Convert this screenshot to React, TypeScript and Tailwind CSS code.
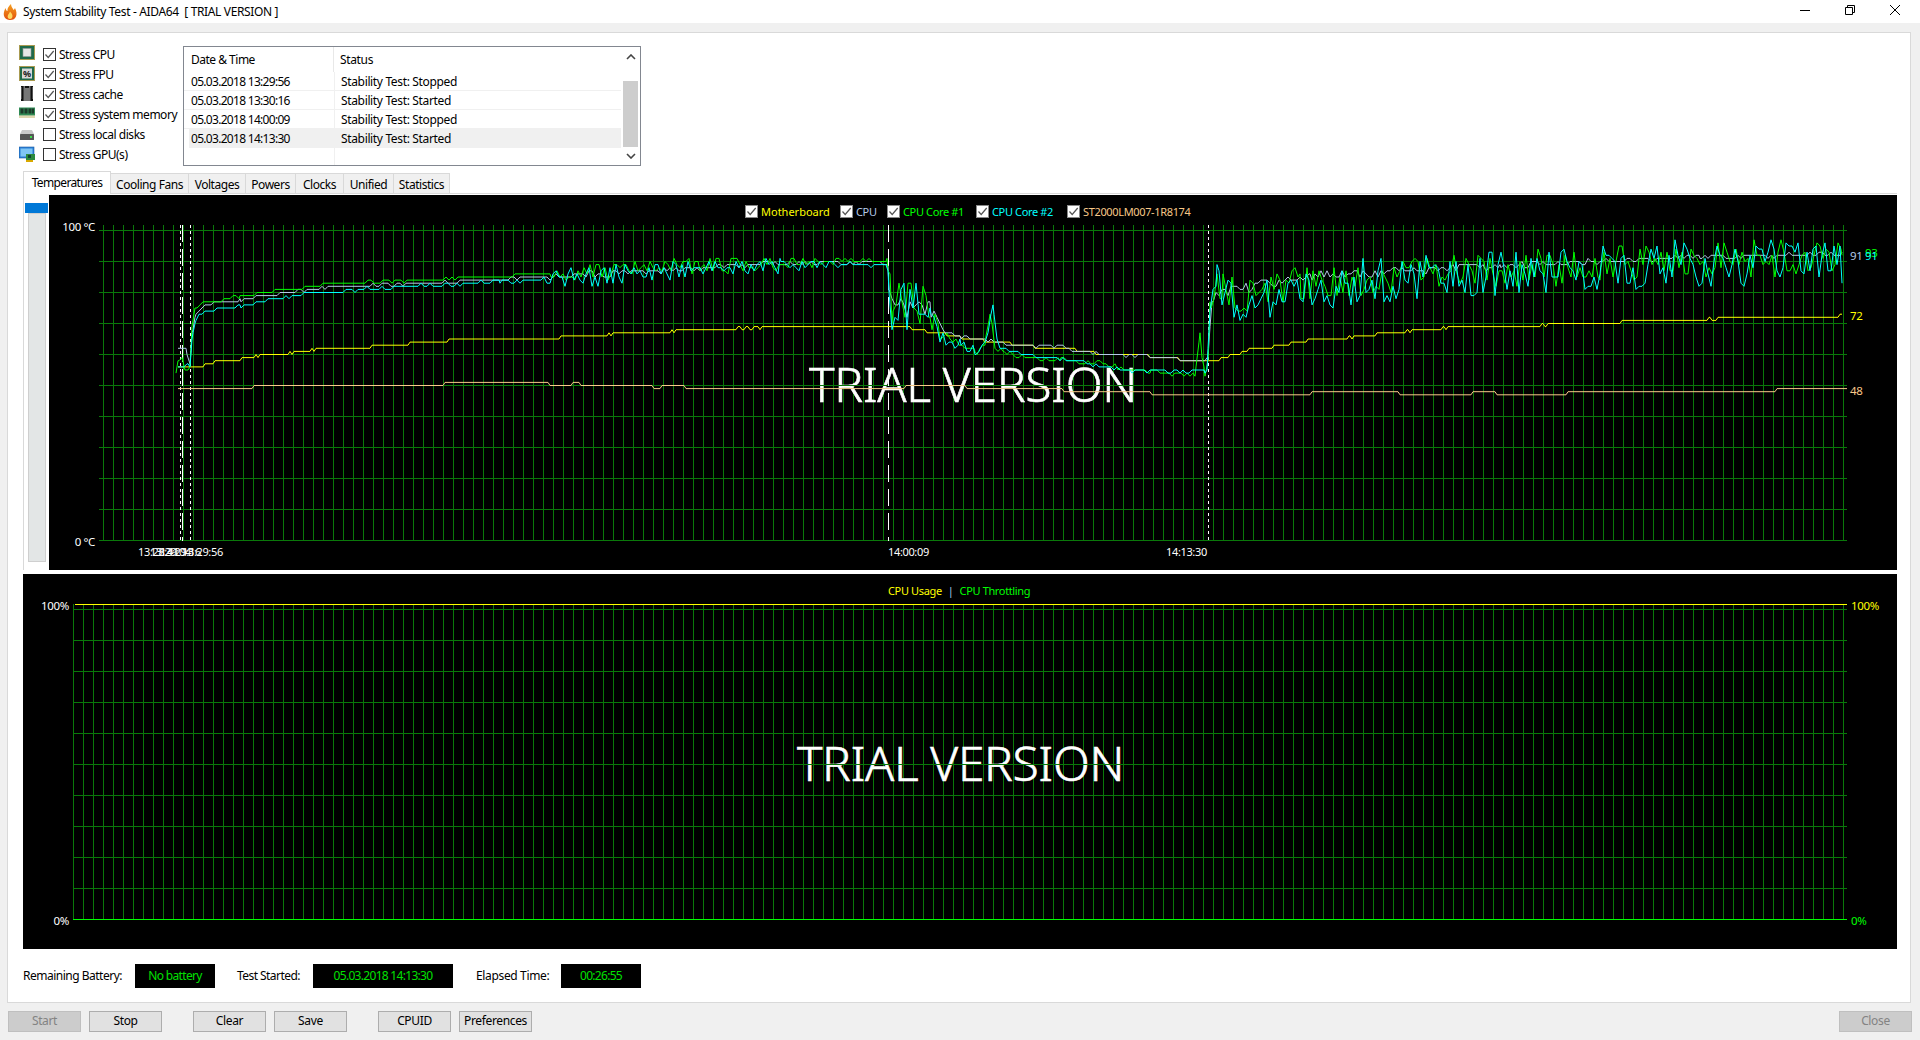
import React from "react";

type P = [number, number];

function rngOf(seed: number) {
  let a = seed;
  return () => {
    a |= 0;
    a = (a + 0x6d2b79f5) | 0;
    let t = Math.imul(a ^ (a >>> 15), 1 | a);
    t = (t + Math.imul(t ^ (t >>> 7), 61 | t)) ^ t;
    return ((t ^ (t >>> 14)) >>> 0) / 4294967296;
  };
}
const lerp = (table: P[], x: number) => {
  if (x <= table[0][0]) return table[0][1];
  for (let i = 1; i < table.length; i++) {
    if (x <= table[i][0]) {
      const [x0, y0] = table[i - 1];
      const [x1, y1] = table[i];
      return y0 + ((y1 - y0) * (x - x0)) / (x1 - x0 || 1);
    }
  }
  return table[table.length - 1][1];
};
const quant = (y: number) => 541.5 - Math.round((541.5 - y) / 3.1) * 3.1;

function noisy(anchors: P[], amps: P[], seed: number, step = 3) {
  const r = rngOf(seed);
  const xs = new Set<number>();
  const start = anchors[0][0];
  const end = anchors[anchors.length - 1][0];
  for (let x = start; x <= end; x += step) xs.add(x);
  anchors.forEach((a) => xs.add(a[0]));
  const sorted = Array.from(xs).sort((a, b) => a - b);
  return sorted
    .map((x) => {
      const amp = lerp(amps, x);
      const y = lerp(anchors, x) + (r() - 0.5) * 2 * amp;
      return `${x.toFixed(1)},${quant(y).toFixed(1)}`;
    })
    .join(" ");
}
function stairs(list: P[], endX: number) {
  const pts: string[] = [];
  list.forEach(([x, t], i) => {
    const y = (541.5 - t * 3.1).toFixed(1);
    pts.push(`${x + (i ? 2 : 0)},${y}`);
    const nx = i + 1 < list.length ? list[i + 1][0] : endX;
    pts.push(`${nx},${y}`);
  });
  return pts.join(" ");
}

const ampG: P[] = [[178, 4], [196, 2], [200, 1], [540, 1.2], [555, 8], [790, 8], [840, 3], [886, 1], [889, 24], [930, 24], [940, 6], [985, 4], [1000, 2], [1200, 2.5], [1212, 18], [1842, 19]];
const ampC: P[] = [[178, 4], [196, 2], [200, 1.2], [540, 1.4], [555, 10], [790, 9], [840, 3], [886, 1], [889, 26], [930, 24], [940, 6], [985, 4], [1000, 2], [1200, 2], [1212, 20], [1300, 24], [1842, 24]];
const ampW: P[] = [[178, 5], [196, 1], [540, 0.8], [555, 3], [886, 2], [889, 14], [930, 10], [940, 1], [1210, 1], [1212, 5], [1842, 1.5]];

const green: P[] = [[176, 372], [178, 365], [182, 360], [185, 372], [190, 368], [192, 327], [195, 312], [200, 306], [205, 303], [240, 298], [270, 293], [310, 288], [330, 285], [430, 281], [500, 277], [550, 275], [700, 267], [780, 263], [886, 262], [888, 264], [892, 306], [930, 306], [940, 335], [960, 347], [975, 354], [985, 347], [990, 312], [995, 347], [1003, 354], [1040, 360], [1060, 360], [1100, 364], [1130, 370], [1150, 372], [1195, 376], [1200, 335], [1204, 374], [1208, 365], [1210, 310], [1214, 290], [1217, 272], [1222, 287], [1240, 296], [1300, 287], [1400, 277], [1600, 265], [1842, 257]];
const cyan: P[] = [[178, 368], [188, 366], [190, 366], [192, 340], [195, 322], [200, 316], [205, 312], [240, 307], [270, 300], [300, 296], [320, 293], [400, 288], [500, 283], [550, 280], [700, 270], [780, 266], [886, 266], [888, 268], [892, 308], [930, 308], [940, 338], [960, 345], [975, 352], [985, 345], [993, 306], [998, 345], [1010, 353], [1060, 360], [1100, 367], [1130, 372], [1205, 372], [1208, 360], [1210, 297], [1217, 270], [1225, 295], [1240, 300], [1300, 290], [1400, 280], [1600, 268], [1842, 260]];
const gray: P[] = [[178, 350], [186, 350], [190, 366], [192, 335], [195, 318], [205, 306], [240, 301], [270, 296], [310, 291], [330, 288], [430, 284], [500, 280], [550, 278], [700, 269], [780, 264], [886, 264], [888, 266], [892, 305], [930, 312], [945, 333], [960, 338], [1000, 342], [1010, 347], [1060, 347], [1080, 353], [1150, 358], [1205, 362], [1208, 360], [1212, 300], [1230, 292], [1310, 277], [1500, 267], [1700, 258], [1842, 255]];

const yellowPts = stairs(
  [[178, 56], [203, 57], [213, 58], [240, 59], [254, 60], [256, 59], [258, 60], [288, 61], [290, 60], [292, 61], [310, 62], [312, 61], [314, 62], [370, 63], [408, 64], [447, 65], [559, 66], [607, 67], [609, 66], [611, 67], [670, 68], [672, 67], [674, 68], [733, 68], [736, 69], [740, 68], [744, 69], [748, 68], [752, 69], [758, 68], [760, 69], [910, 68], [925, 67], [945, 66], [960, 65], [983, 64], [1010, 63], [1033, 62], [1075, 61], [1094, 60], [1148, 59], [1178, 58], [1219, 59], [1228, 60], [1240, 61], [1247, 62], [1272, 63], [1289, 64], [1306, 65], [1347, 66], [1350, 65], [1352, 66], [1375, 67], [1405, 68], [1408, 67], [1410, 68], [1441, 69], [1444, 68], [1446, 69], [1540, 70], [1543, 69], [1546, 70], [1620, 71], [1707, 72], [1710, 71], [1716, 72], [1838, 73]],
  1842
);
const sandyPts = stairs(
  [[178, 49], [252, 50], [443, 51], [548, 50], [571, 51], [579, 50], [652, 49], [660, 50], [684, 49], [904, 50], [965, 49], [1062, 48], [1150, 47], [1310, 48], [1398, 47], [1471, 48], [1495, 47], [1566, 48], [1775, 49]],
  1847
);

const Check = ({ on, className }: { on: boolean; className: string }) => (
  <span className={className}>
    {on && (
      <svg viewBox="0 0 11 11" className="w-[11px] h-[11px]">
        <path d="M1.5 5.5 L4.2 8.5 L9.7 2" fill="none" stroke="#555" strokeWidth="1.2" />
      </svg>
    )}
  </span>
);

const Ico = ({ children }: { children: React.ReactNode }) => (
  <svg viewBox="0 0 17 17" className="w-[17px] h-[17px] shrink-0">
    {children}
  </svg>
);

const icons: React.ReactNode[] = [
  <Ico key="cpu">
    <rect x="0" y="0" width="16" height="15" fill="#a89a50" />
    <rect x="1" y="1" width="14" height="13" fill="#1f6a4a" />
    <rect x="4" y="3.5" width="8" height="8" fill="#e6e6e6" stroke="#9a9a9a" strokeWidth="0.6" />
  </Ico>,
  <Ico key="fpu">
    <rect x="0" y="1" width="16" height="15" fill="#a89a50" />
    <rect x="1" y="2" width="14" height="13" fill="#1f6a4a" />
    <rect x="3" y="3.5" width="10" height="10" fill="#d8d8d8" />
    <text x="8" y="12" textAnchor="middle" fontSize="9" fontWeight="700" fill="#222">%</text>
  </Ico>,
  <Ico key="cache">
    <rect x="2" y="1" width="12" height="15" fill="#111" />
    <rect x="4.5" y="1" width="7" height="15" fill="#777" />
    <rect x="6" y="1" width="4" height="2" fill="#111" />
    <path d="M2 3h1M2 5h1M2 7h1M2 9h1M2 11h1M2 13h1M13 3h1M13 5h1M13 7h1M13 9h1M13 11h1M13 13h1" stroke="#bbb" strokeWidth="0.8" />
  </Ico>,
  <Ico key="mem">
    <rect x="0" y="2.5" width="16" height="8" fill="#2f8a55" />
    <rect x="1.5" y="3.5" width="3" height="5" fill="#1c3a2a" />
    <rect x="5.5" y="3.5" width="3" height="5" fill="#1c3a2a" />
    <rect x="9.5" y="3.5" width="3" height="5" fill="#1c3a2a" />
    <rect x="13" y="3.5" width="2" height="5" fill="#1c3a2a" />
    <path d="M1 10.5v2.5M3 10.5v2.5M5 10.5v2.5M7 10.5v2.5M9 10.5v2.5M11 10.5v2.5M13 10.5v2.5M15 10.5v2.5" stroke="#b5a64e" strokeWidth="0.9" />
  </Ico>,
  <Ico key="disk">
    <path d="M3 5 H13 L15 9 H1 Z" fill="#c9c9c9" />
    <rect x="1" y="9" width="14" height="6" rx="0.5" fill="#555" />
    <rect x="11" y="11" width="2" height="2" fill="#3fdc4f" />
  </Ico>,
  <Ico key="gpu">
    <rect x="0" y="2" width="15" height="11" fill="#2a7fd6" stroke="#1c5aa0" strokeWidth="0.6" />
    <rect x="1.5" y="3.5" width="12" height="8" fill="#7fc6f5" />
    <rect x="7" y="9" width="9" height="6" fill="#2b8a3e" />
    <rect x="9" y="10" width="3" height="3" fill="#143" />
    <rect x="7" y="15" width="7" height="2" fill="#d8a900" />
  </Ico>,
];

const stress: [string, boolean][] = [
  ["Stress CPU", true],
  ["Stress FPU", true],
  ["Stress cache", true],
  ["Stress system memory", true],
  ["Stress local disks", false],
  ["Stress GPU(s)", false],
];
const log: [string, string][] = [
  ["05.03.2018 13:29:56", "Stability Test: Stopped"],
  ["05.03.2018 13:30:16", "Stability Test: Started"],
  ["05.03.2018 14:00:09", "Stability Test: Stopped"],
  ["05.03.2018 14:13:30", "Stability Test: Started"],
];
const tabs: [string, string][] = [
  ["Cooling Fans", "w-[78px]"],
  ["Voltages", "w-[57px]"],
  ["Powers", "w-[50px]"],
  ["Clocks", "w-[48px]"],
  ["Unified", "w-[50px]"],
  ["Statistics", "w-[56px]"],
];
const legend: [string, string, string][] = [
  ["Motherboard", "text-[#ffff00] tracking-[0px]", "w-[95px]"],
  ["CPU", "text-[#b4c8e8]", "w-[47px]"],
  ["CPU Core #1", "text-[#00ff00]", "w-[89px]"],
  ["CPU Core #2", "text-[#00ffff]", "w-[91px]"],
  ["ST2000LM007-1R8174", "text-[#f8c888]", "w-[130px]"],
];

const range = (from: number, to: number, step: number) => {
  const a: number[] = [];
  for (let v = from; v <= to; v += step) a.push(v);
  return a;
};

function Chart1() {
  const V = range(103.5, 1843.5, 10);
  const H = range(231.5, 541.5, 31);
  return (
    <svg viewBox="49 226 1848 345" className="w-[1848px] h-[345px] block overflow-visible">
      <g stroke="#0a780a" shapeRendering="crispEdges">
        {V.map((x) => (
          <line key={x} x1={x} x2={x} y1={226} y2={542} />
        ))}
      </g>
      <text x={809} y={403} fontSize={48} fontWeight={300} fill="#fff" stroke="#fff" strokeWidth={0.6} textLength={328} lengthAdjust="spacingAndGlyphs">TRIAL VERSION</text>
      <g stroke="#0a780a" shapeRendering="crispEdges">
        {H.map((y) => (
          <line key={y} x1={99} x2={1847} y1={y} y2={y} />
        ))}
      </g>
      <g stroke="#fff" shapeRendering="crispEdges">
        <line x1={180.5} x2={180.5} y1={226} y2={542} strokeDasharray="3 3" />
        <line x1={182.5} x2={182.5} y1={226} y2={542} strokeDasharray="17 7" />
        <line x1={190.5} x2={190.5} y1={226} y2={542} strokeDasharray="3 3" />
        <line x1={888.5} x2={888.5} y1={226} y2={542} strokeDasharray="17 7" />
        <line x1={1208.5} x2={1208.5} y1={226} y2={542} strokeDasharray="3 3" />
      </g>
      <g fill="none">
        <polyline points={sandyPts} stroke="#f8c888" />
        <polyline points={yellowPts} stroke="#ffff00" />
        <polyline points={noisy(gray, ampW, 11)} stroke="#b4c8e8" />
        <polyline points={noisy(green, ampG, 22)} stroke="#00ff00" />
        <polyline points={noisy(cyan, ampC, 33)} stroke="#00ffff" />
      </g>
      <g fontSize={11.5} fill="#fff">
        <text x={95} y={232} textAnchor="end">100 °C</text>
        <text x={95} y={547} textAnchor="end">0 °C</text>
        <g fontSize={11} letterSpacing="-0.35">
          <text x={138} y={557}>13:28:41</text>
          <text x={150} y={557}>13:29:04</text>
          <text x={160} y={557}>13:29:16</text>
          <text x={182} y={557}>13:29:56</text>
          <text x={888} y={557}>14:00:09</text>
          <text x={1166} y={557}>14:13:30</text>
        </g>
        <text x={1850} y={261} fill="#b4c8e8">91</text>
        <text x={1865} y={258} fill="#00ff00">93</text>
        <text x={1865} y={261} fill="#00ffff">91</text>
        <text x={1850} y={321} fill="#ffff00">72</text>
        <text x={1850} y={396} fill="#f8c888">48</text>
      </g>
    </svg>
  );
}

function Chart2() {
  const V = range(73.5, 1843.5, 10);
  const H = range(610.5, 889.5, 31);
  return (
    <svg viewBox="23 600 1874 350" className="w-[1874px] h-[350px] block overflow-visible">
      <g stroke="#0a780a" shapeRendering="crispEdges">
        {V.map((x) => (
          <line key={x} x1={x} x2={x} y1={605} y2={920} />
        ))}
      </g>
      <text x={797} y={782} fontSize={48} fontWeight={300} fill="#fff" stroke="#fff" strokeWidth={0.6} textLength={327} lengthAdjust="spacingAndGlyphs">TRIAL VERSION</text>
      <g stroke="#0a780a" shapeRendering="crispEdges">
        {H.map((y) => (
          <line key={y} x1={73} x2={1847} y1={y} y2={y} />
        ))}
      </g>
      <g shapeRendering="crispEdges">
        <line x1={75} x2={1847} y1={605.5} y2={605.5} stroke="#ffff00" />
        <line x1={73} x2={1847} y1={920.5} y2={920.5} stroke="#00ff00" />
      </g>
      <g fontSize={11.5}>
        <text x={69} y={611} textAnchor="end" fill="#fff">100%</text>
        <text x={69} y={926} textAnchor="end" fill="#fff">0%</text>
        <text x={1851} y={611} fill="#ffff00">100%</text>
        <text x={1851} y={926} fill="#00ff00">0%</text>
      </g>
    </svg>
  );
}

export default function App() {
  return (
    <div className="w-[1920px] h-[1040px] bg-[#f0f0f0] flex flex-col overflow-hidden text-[12px] leading-none text-black tracking-[-0.35px] font-['Noto_Sans','Open_Sans',sans-serif]">
      <div className="h-[23px] bg-white flex items-center shrink-0 relative">
        <svg viewBox="0 0 14 16" className="w-[14px] h-[16px] ml-[3px]">
          <defs>
            <linearGradient id="fl" x1="0" y1="0" x2="0" y2="1">
              <stop offset="0" stopColor="#f5a020" />
              <stop offset="1" stopColor="#e2500c" />
            </linearGradient>
          </defs>
          <path d="M7 16 C2 16 0 12 1 8 C1.5 6 2 5 2.5 4 C3 6 3.5 7 4.5 7 C4 4 6 2 8 0 C8 3 10 4 10.5 6 C11 5.5 11.5 5 12 4 C13.5 7 14 10 13 12.5 C12 15 10 16 7 16 Z" fill="url(#fl)" />
          <path d="M7 15 C5 15 4 13 5 11 C5.5 10 6.5 9 7 7.5 C8 9 9.5 10 9.5 12 C9.5 14 8.5 15 7 15 Z" fill="#ffd860" />
        </svg>
        <span className="ml-[6px] whitespace-pre">System Stability Test - AIDA64  [ TRIAL VERSION ]</span>
        <div className="ml-auto flex items-center mr-[20px] mb-[3px] gap-[35px]">
          <svg viewBox="0 0 10 10" className="w-[10px] h-[10px]"><path d="M0 5.5H10" stroke="#000" /></svg>
          <svg viewBox="0 0 10 10" className="w-[10px] h-[10px]"><path d="M.5 2.5h7v7h-7zM2.5 2.5v-2h7v7h-2" fill="none" stroke="#000" /></svg>
          <svg viewBox="0 0 10 10" className="w-[10px] h-[10px]"><path d="M0 0L10 10M10 0L0 10" stroke="#000" strokeWidth="1" /></svg>
        </div>
      </div>

      <div className="mt-[9px] ml-[7px] w-[1904px] h-[971px] bg-white border border-[#d9d9d9] flex flex-col shrink-0">
        <div className="flex h-[138px] items-start shrink-0">
          <div className="mt-[12px] ml-[11px] w-[164px] flex flex-col">
            {stress.map(([t, on], i) => (
              <div key={t} className="h-[20px] flex items-start">
                {icons[i]}
                <Check on={on} className="mt-[3px] ml-[7px] w-[13px] h-[13px] border border-[#333] bg-white flex items-center justify-center shrink-0" />
                <span className="ml-[3px] mt-[3px] leading-[13px] whitespace-nowrap tracking-[-0.48px]">{t}</span>
              </div>
            ))}
          </div>
          <div className="mt-[13px] w-[458px] h-[120px] border border-[#828790] flex bg-white">
            <div className="flex-1 flex flex-col">
              <div className="h-[25px] flex items-center shrink-0">
                <span className="w-[150px] pl-[7px] h-full flex items-center border-r border-[#e8e8e8] tracking-[-0.5px]">Date &amp; Time</span>
                <span className="pl-[6px]">Status</span>
              </div>
              {log.map(([d, s], i) => (
                <div key={d} className={`h-[19px] flex items-center shrink-0 border-b border-[#f0f0f0] ${i === 3 ? "bg-[#f0f0f0] ml-[5px]" : ""}`}>
                  <span className={`${i === 3 ? "w-[146px] pl-[2px]" : "w-[151px] pl-[7px]"} h-full flex items-center border-r border-[#f0f0f0] tracking-[-0.7px] pt-[2px]`}>{d}</span>
                  <span className="pl-[6px] pt-[2px]">{s}</span>
                </div>
              ))}
              <div className="flex-1 ml-[150px] w-[1px] bg-[#f0f0f0]" />
            </div>
            <div className="w-[19px] shrink-0 flex flex-col items-center bg-white">
              <div className="h-[34px] w-full flex items-start justify-center pt-[7px]">
                <svg viewBox="0 0 10 6" className="w-[10px] h-[6px]"><path d="M1 5L5 1L9 5" fill="none" stroke="#444" strokeWidth="1.6" /></svg>
              </div>
              <div className="h-[66px] w-[15px] bg-[#cdcdcd]" />
              <div className="flex-1 w-full flex items-center justify-center">
                <svg viewBox="0 0 10 6" className="w-[10px] h-[6px]"><path d="M1 1L5 5L9 1" fill="none" stroke="#444" strokeWidth="1.6" /></svg>
              </div>
            </div>
          </div>
        </div>

        <div className="ml-[15px] w-[1874px] h-[23px] flex items-end border-b border-[#d9d9d9] shrink-0">
          <div className="w-[88px] h-[23px] -mb-px bg-white border border-b-0 border-[#d9d9d9] flex items-center justify-center pb-[1px] relative tracking-[-0.65px]">Temperatures</div>
          {tabs.map(([t, w]) => (
            <div key={t} className={`${w} h-[20px] bg-[#f0f0f0] border border-l-0 border-b-0 border-[#d9d9d9] flex items-center justify-center pt-[2px] tracking-[-0.45px]`}>{t}</div>
          ))}
        </div>

        <div className="ml-[15px] flex h-[376px] shrink-0">
          <div className="w-[26px] border-l border-[#d9d9d9] flex flex-col pt-[9px] pb-[8px] pl-[1px]">
            <div className="h-[10px] w-[23px] bg-[#0078d7] shrink-0" />
            <div className="flex-1 ml-[3px] w-[18px] bg-[#e3e6e6] border border-[#cfcfcf]" />
          </div>
          <div className="w-[1848px] h-[375px] mt-[1px] bg-black">
            <div className="h-[30px] pl-[696px] pt-[3px] flex items-center whitespace-nowrap text-[11px]">
              {legend.map(([t, c, w]) => (
                <div key={t} className={`${w} flex items-center shrink-0`}>
                  <Check on className="w-[13px] h-[13px] border border-[#888] bg-white flex items-center justify-center shrink-0 mr-[3px]" />
                  <span className={c}>{t}</span>
                </div>
              ))}
            </div>
            <Chart1 />
          </div>
        </div>

        <div className="ml-[15px] mt-[4px] w-[1874px] h-[375px] bg-black shrink-0">
          <div className="h-[25px] pl-[865px] flex items-end whitespace-nowrap pb-[3px] text-[11px]">
            <span className="text-[#ffff00]">CPU Usage</span>
            <span className="text-[#a0c8e8] mx-[6px]">|</span>
            <span className="text-[#00ff00]">CPU Throttling</span>
          </div>
          <Chart2 />
        </div>

        <div className="ml-[15px] mt-[15px] h-[24px] flex items-center shrink-0 whitespace-nowrap">
          <span className="w-[112px] tracking-[-0.5px]">Remaining Battery:</span>
          <span className="w-[80px] h-[24px] bg-black text-[#00e000] flex items-center justify-center tracking-[-0.65px]">No battery</span>
          <span className="ml-[22px] w-[76px] tracking-[-0.55px]">Test Started:</span>
          <span className="w-[140px] h-[24px] bg-black text-[#00e000] flex items-center justify-center tracking-[-0.7px]">05.03.2018 14:13:30</span>
          <span className="ml-[23px] w-[85px]">Elapsed Time:</span>
          <span className="w-[80px] h-[24px] bg-black text-[#00e000] flex items-center justify-center tracking-[-0.7px]">00:26:55</span>
        </div>
      </div>

      <div className="mt-[8px] ml-[8px] w-[1904px] h-[21px] flex shrink-0">
        <div className="w-[73px] h-[21px] bg-[#cccccc] border border-[#bfbfbf] text-[#838383] flex items-center justify-center pb-[2px]">Start</div>
        <div className="ml-[8px] w-[73px] h-[21px] bg-[#e1e1e1] border border-[#adadad] flex items-center justify-center pb-[2px]">Stop</div>
        <div className="ml-[31px] w-[73px] h-[21px] bg-[#e1e1e1] border border-[#adadad] flex items-center justify-center pb-[2px]">Clear</div>
        <div className="ml-[8px] w-[73px] h-[21px] bg-[#e1e1e1] border border-[#adadad] flex items-center justify-center pb-[2px]">Save</div>
        <div className="ml-[31px] w-[73px] h-[21px] bg-[#e1e1e1] border border-[#adadad] flex items-center justify-center pb-[2px]">CPUID</div>
        <div className="ml-[8px] w-[73px] h-[21px] bg-[#e1e1e1] border border-[#adadad] flex items-center justify-center pb-[2px]">Preferences</div>
        <div className="ml-auto w-[73px] h-[21px] bg-[#cccccc] border border-[#bfbfbf] text-[#838383] flex items-center justify-center pb-[2px]">Close</div>
      </div>
    </div>
  );
}
